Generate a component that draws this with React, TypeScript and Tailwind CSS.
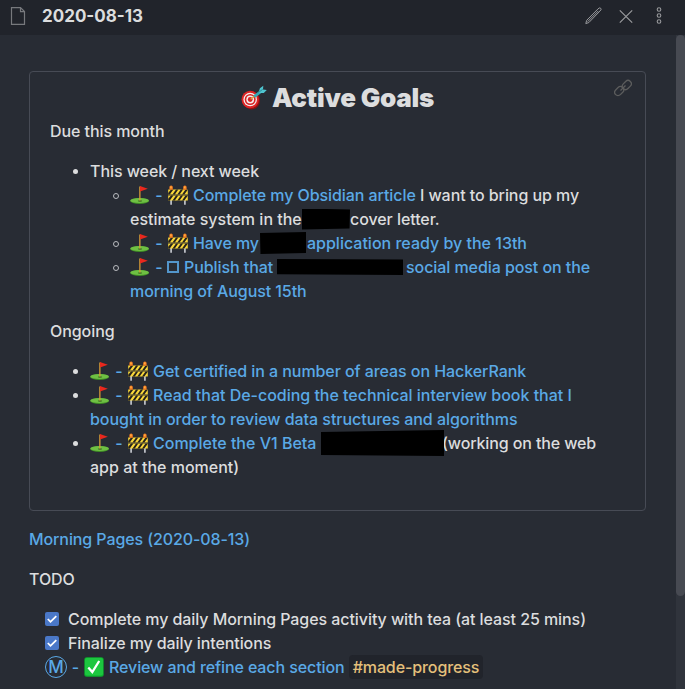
import React from "react";

type Kids = { children?: React.ReactNode };

function Flag() {
  return (
    <svg className="h-5 w-5 shrink-0" viewBox="0 0 20 20">
      <ellipse cx="9.6" cy="16" rx="9.5" ry="2.9" fill="#3f8f25" />
      <ellipse cx="9.6" cy="15.4" rx="9.3" ry="2.5" fill="#6fc043" />
      <ellipse cx="10" cy="16" rx="2.2" ry=".7" fill="#3d6b24" />
      <path d="M9.2 1.5h1.3v14H9.2z" fill="#d39a35" />
      <path d="M10 1l7.8 2.7L10 6.6z" fill="#e9281d" />
    </svg>
  );
}

function Barrier() {
  return (
    <svg className="h-5 w-5 shrink-0" viewBox="0 0 20 20">
      <path d="M2.2 15h1.8v4.8H2.2zM16 15h1.8v4.8H16z" fill="#b9bcc2" />
      <path d="M.2 4.5h19.6v5H.2zM.2 10.5h19.6v5H.2z" fill="#f9d83a" />
      <path
        d="M3 4.5h2.4L1.8 9.5H.2V7.9zM8 4.5h2.3L6.8 9.5H4.5zM12.8 4.5h2.3l-3.5 5H9.3zM17.5 4.5h2.3v.2l-3.5 4.8H14zM3 10.5h2.4l-3.6 5H.2v-1.7zM8 10.5h2.3l-3.5 5H4.5zM12.8 10.5h2.3l-3.5 5H9.3zM17.5 10.5h2.3v.2l-3.5 4.8H14z"
        fill="#24211b"
      />
      <path d="M1.4 2.1a1.7 1.7 0 0 1 3.4 0v2.6H1.4zM15.2 2.1a1.7 1.7 0 0 1 3.4 0v2.6h-3.4z" fill="#f57a20" />
      <path d="M2.4 1.6h1.2v1.6H2.4zM16.2 1.6h1.2v1.6h-1.2z" fill="#ffc04d" />
    </svg>
  );
}

function Target() {
  return (
    <svg className="h-[27px] w-[27px] shrink-0" viewBox="0 0 27 27">
      <ellipse cx="11.6" cy="16.4" rx="8.4" ry="9" fill="#8e1113" />
      <circle cx="10.2" cy="15.5" r="8.7" fill="#dc2424" />
      <circle cx="10.2" cy="15.5" r="6.8" fill="#f5eeee" />
      <circle cx="10.2" cy="15.5" r="5.5" fill="#d92323" />
      <circle cx="10.2" cy="15.5" r="3.9" fill="#f5eeee" />
      <circle cx="10.2" cy="15.5" r="2.4" fill="#d92323" />
      <path d="M10.6 15.3l5.2-4" stroke="#d6a53c" strokeWidth="1.4" />
      <path d="M14.2 12.6l6.2-4.8" stroke="#32a9b5" strokeWidth="2.8" />
      <path d="M18.5 9l1.4-4.7 3.4-2.6-.3 3.8 3.8.4-3 3.2z" fill="#4fc4cf" />
      <path d="M18.5 8.5l4.2-3.2" stroke="#237f8b" strokeWidth=".8" />
    </svg>
  );
}

function Prefix({ box = false }: { box?: boolean }) {
  return (
    <>
      <Flag />
      <span className="w-[18px] shrink-0 text-center text-[#5aa9e6]">-</span>
      {box ? (
        <span className="mr-[5px] ml-[-1px] h-[12px] w-[12px] shrink-0 border-2 border-[#5aa9e6]/85" />
      ) : (
        <>
          <Barrier />
          <span className="w-[5px] shrink-0" />
        </>
      )}
    </>
  );
}

function Line({ children }: Kids) {
  return <div className="flex h-6 items-center whitespace-pre">{children}</div>;
}

function Item({ hollow = false, children }: Kids & { hollow?: boolean }) {
  return (
    <li className="flex">
      <span className="flex h-6 w-10 shrink-0 items-center pt-px pl-[23px]">
        {hollow ? (
          <span className="ml-[-0.5px] h-[6px] w-[6px] rounded-full border border-[#b9bbbf]" />
        ) : (
          <span className="h-[5px] w-[5px] rounded-full bg-[#dcddde]" />
        )}
      </span>
      <div>{children}</div>
    </li>
  );
}

function Link({ children }: Kids) {
  return <span className="text-[#5aa9e6]">{children}</span>;
}

function Check() {
  return (
    <span className="mr-[9px] flex h-[14px] w-[14px] items-center justify-center rounded-[2px] bg-[#4a78c8]">
      <svg className="h-[14px] w-[14px]" viewBox="0 0 14 14" fill="none" stroke="#fff" strokeWidth="1.8">
        <path d="M2.8 7l2.7 2.8 5.8-5.7" />
      </svg>
    </span>
  );
}

export default function App() {
  return (
    <div className="flex h-[689px] w-[685px] flex-col overflow-hidden bg-[#282c34] font-['Inter',sans-serif] text-[16px] leading-6 font-[450] tracking-[-0.07px] text-[#dcddde]">
      <header className="flex h-[35px] shrink-0 items-center bg-[#21242b] text-[#999a9d]">
        <svg className="ml-[10px] h-[20px] w-[16px] -translate-y-[2px]" viewBox="0 0 16 20" fill="none" stroke="#77797d" strokeWidth="1.2">
          <path d="M1.5 1.6h9l4 4v12.7h-13zM10.5 1.6v4h4" />
        </svg>
        <h1 className="ml-4 -translate-y-[2px] text-[17px] font-bold tracking-normal text-[#dcddde]">2020-08-13</h1>
        <div className="mr-[17px] ml-auto flex items-center gap-[16px]">
          <svg className="h-[18px] w-[18px] -translate-x-[1.5px] -translate-y-[2px]" viewBox="0 0 18 18" fill="none" stroke="currentColor" strokeWidth="1">
            <path d="M1.3 16.6l.9-3.3L13.4 2l1.3-1q.8-.4 1.5.3.8.8.2 1.6l-1 1.2L4.4 15.5zM3.2 14.6L13.8 3.9" />
          </svg>
          <svg className="h-[14px] w-[14px] -translate-x-px -translate-y-[1.5px]" viewBox="0 0 14 14" fill="none" stroke="currentColor" strokeWidth="1.2">
            <path d="M.8.8l12.4 12.4M13.2.8L.8 13.2" />
          </svg>
          <svg className="h-[18px] w-[18px] -translate-y-[2.5px]" viewBox="0 0 18 18" fill="none" stroke="currentColor" strokeWidth="1.1">
            <circle cx="9" cy="3" r="1.8" />
            <circle cx="9" cy="9" r="1.8" />
            <circle cx="9" cy="15" r="1.8" />
          </svg>
        </div>
      </header>
      <div className="flex min-h-0 flex-1">
        <main className="w-[676px] pt-9 pl-[29px]">
          <section className="relative h-[440px] w-[617px] rounded-[4px] border border-[#474b55] px-5">
            <svg className="absolute top-[7px] right-[13px] h-[18px] w-[18px]" viewBox="0 0 18 18" fill="none" stroke="#5c5d5d" strokeWidth="1.3">
              <rect x="7.8" y="2.7" width="10" height="6.6" rx="3.3" transform="rotate(-45 12.8 6)" />
              <rect x=".2" y="8.8" width="10" height="6.6" rx="3.3" transform="rotate(-45 5.2 12.1)" />
              <path d="M6.5 11.5l5-5" />
            </svg>
            <h2 className="flex h-[47px] items-center pt-1 pl-[190px] text-[26px] font-black tracking-[-0.23px] whitespace-nowrap">
              <Target />
              <span className="ml-[5px]">Active Goals</span>
            </h2>
            <p>Due this month</p>
            <ul className="mt-4">
              <Item>
                <Line>This week / next week</Line>
                <ul>
                  <Item hollow>
                    <Line><Prefix /><Link>Complete my Obsidian article</Link> I want to bring up my</Line>
                    <Line>
                      <span className="w-[172px] tracking-normal">estimate system in the</span>
                      <span className="h-[21px] w-[48px] bg-black [clip-path:polygon(0_0,100%_5%,99%_95%,0_100%)]" />
                      <span>cover letter.</span>
                    </Line>
                  </Item>
                  <Item hollow>
                    <Line>
                      <Prefix />
                      <span className="w-[67px] text-[#5aa9e6]">Have my</span>
                      <span className="mr-px h-[22px] w-[46px] bg-black [clip-path:polygon(0_5%,100%_0,100%_95%,1%_100%)]" />
                      <span className="tracking-normal text-[#5aa9e6]">application ready by the 13th</span>
                    </Line>
                  </Item>
                  <Item hollow>
                    <Line>
                      <Prefix box />
                      <span className="w-[93px] text-[#5aa9e6]">Publish that</span>
                      <span className="mr-[3px] h-[16px] w-[126px] bg-black [clip-path:polygon(0_0,100%_3%,100%_100%,0_95%)]" />
                      <Link>social media post on the</Link>
                    </Line>
                    <Line><Link>morning of August 15th</Link></Line>
                  </Item>
                </ul>
              </Item>
            </ul>
            <p className="mt-4">Ongoing</p>
            <ul className="mt-4">
              <Item>
                <Line><Prefix /><Link>Get certified in a number of areas on HackerRank</Link></Line>
              </Item>
              <Item>
                <Line>
                  <Prefix />
                  <span className="tracking-[-0.02px] text-[#5aa9e6]">Read that De-coding the technical interview book that I</span>
                </Line>
                <Line><span className="tracking-[-0.04px] text-[#5aa9e6]">bought in order to review data structures and algorithms</span></Line>
              </Item>
              <Item>
                <Line>
                  <Prefix />
                  <span className="w-[168px] tracking-normal text-[#5aa9e6]">Complete the V1 Beta</span>
                  <span className="h-[26px] w-[123px] bg-black [clip-path:polygon(0_8%,100%_0,100%_100%,0_96%)]" />
                  <span className="-ml-[2px] tracking-[-0.12px]">(working on the web</span>
                </Line>
                <Line><span className="tracking-normal">app at the moment)</span></Line>
              </Item>
            </ul>
          </section>
          <p className="mt-4 tracking-[-0.1px] text-[#5aa9e6]">Morning Pages (2020-08-13)</p>
          <p className="mt-4">TODO</p>
          <div className="mt-4 pl-4">
            <Line><Check />Complete my daily Morning Pages activity with tea (at least 25 mins)</Line>
            <Line><Check /><span className="tracking-[-0.1px]">Finalize my daily intentions</span></Line>
            <Line>
              <span className="flex h-[22px] w-[22px] shrink-0 items-center justify-center rounded-full border-[1.5px] border-[#5aa9e6] text-[17px] text-[#5aa9e6]">M</span>
              <span className="w-[17px] text-center text-[#5aa9e6]">-</span>
              <svg className="mr-[5px] h-5 w-5" viewBox="0 0 20 20">
                <rect x=".3" y=".3" width="19.4" height="19.4" rx="2.5" fill="#0bad2d" />
                <rect x="1" y="1" width="18" height="17.5" rx="2" fill="#1cc73f" />
                <path d="M4.3 10.5l4 4.6L15.2 4" fill="none" stroke="#fff" strokeWidth="2.3" />
              </svg>
              <span className="w-[240px] tracking-[-0.1px] text-[#5aa9e6]">Review and refine each section</span>
              <span className="flex h-6 w-[134px] items-center justify-center rounded-[4px] bg-[#21242b] tracking-[-0.1px] text-[#e5c07b]">#made-progress</span>
            </Line>
          </div>
        </main>
        <div className="w-[9px] bg-[#30343c]">
          <div className="h-[561px] rounded-[5px] bg-[#474a52]" />
        </div>
      </div>
    </div>
  );
}
